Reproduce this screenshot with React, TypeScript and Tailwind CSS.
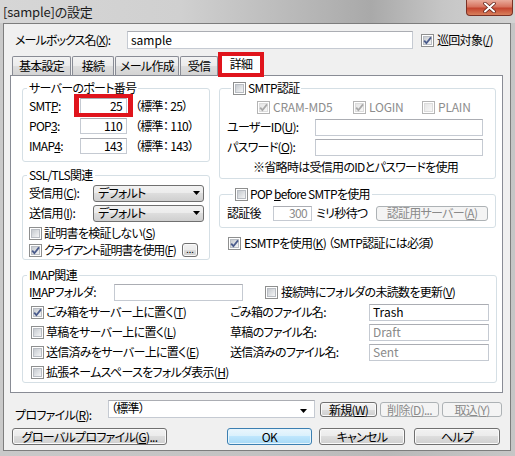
import React from "react";

function U({ c }: { c: string }) {
  return <span className="underline underline-offset-[1px] decoration-[1px]">{c}</span>;
}

function Check({ checked = false, disabled = false }: { checked?: boolean; disabled?: boolean }) {
  return (
    <span
      className={
        disabled
          ? "relative inline-flex shrink-0 w-[13px] h-[13px] border border-[#b4b4b4] bg-white p-[1px]"
          : "relative inline-flex shrink-0 w-[13px] h-[13px] border border-[#8e8f8f] bg-white p-[1px]"
      }
    >
      <span
        className={
          disabled
            ? "block w-full h-full border border-[#dcdcdc] bg-[linear-gradient(135deg,#e6e6e6,#f7f7f7)]"
            : "block w-full h-full border border-[#b9bdc3] bg-[linear-gradient(135deg,#c6cacf,#f4f5f6)]"
        }
      />
      {checked && (
        <svg className="absolute left-0 top-0" width="11" height="11" viewBox="0 0 11 11">
          <path
            d="M2.2 5.6 L4.4 8.2 L9 2.4"
            fill="none"
            stroke={disabled ? "#a9a9a9" : "#4a5b8c"}
            strokeWidth="1.8"
          />
        </svg>
      )}
    </span>
  );
}

function Field({
  cls,
  value = "",
  gray = false,
  right = false,
}: {
  cls: string;
  value?: string;
  gray?: boolean;
  right?: boolean;
}) {
  return (
    <div
      className={`${cls} flex items-center bg-white border border-[#c5cad2] border-t-[#abadb3] leading-[14px] ${
        right ? "justify-end pr-[4px]" : "justify-start pl-[3px]"
      } ${gray ? "text-[#8a8a8a]" : "text-black"}`}
    >
      {value}
    </div>
  );
}

function Btn({
  cls,
  children,
  disabled = false,
  primary = false,
}: {
  cls: string;
  children: React.ReactNode;
  disabled?: boolean;
  primary?: boolean;
}) {
  const base = "flex items-center justify-center rounded-[3px] border leading-[14px] shrink-0";
  const look = disabled
    ? "border-[#adb2b5] bg-[#f4f4f4] text-[#8a8a8a]"
    : primary
    ? "border-[#3c7fb1] bg-[linear-gradient(#eaf6fd,#d9f0fc_50%,#bee6fd_50%,#a7d9f5)] shadow-[inset_0_0_0_1px_#e6f5fd] text-black"
    : "border-[#707070] bg-[linear-gradient(#f2f2f2,#ebebeb_50%,#dddddd_50%,#cfcfcf)] shadow-[inset_0_0_0_1px_#fafafa] text-black";
  return <div className={`${cls} ${base} ${look}`}>{children}</div>;
}

function Arrow() {
  return (
    <svg width="7" height="4" viewBox="0 0 7 4" className="shrink-0">
      <path d="M0 0 H7 L3.5 4 Z" fill="#000" />
    </svg>
  );
}

function Combo({ cls, text }: { cls: string; text: string }) {
  return (
    <div
      className={`${cls} flex items-center justify-between pl-[4px] pr-[3px] rounded-[3px] border border-[#707070] bg-[linear-gradient(#f2f2f2,#ebebeb_50%,#dddddd_50%,#cfcfcf)] leading-[14px]`}
    >
      <span>{text}</span>
      <Arrow />
    </div>
  );
}

function Tab({ w, label }: { w: string; label: string }) {
  return (
    <div
      className={`${w} h-[19px] mr-[1px] border border-b-0 border-[#898c95] rounded-t-[2px] bg-[linear-gradient(#f3f3f3,#ebebeb_50%,#dedede_50%,#d3d3d3)] flex items-center justify-center leading-[14px]`}
    >
      {label}
    </div>
  );
}

export default function App() {
  return (
    <div className="w-[515px] h-[456px] overflow-hidden flex flex-col whitespace-nowrap bg-[linear-gradient(90deg,#c9c9c9,#c2c2c2_50%,#b9b9b9_75%,#c6c6c6)] font-['Noto_Sans_CJK_JP','Noto_Sans',sans-serif] [font-feature-settings:'palt'] text-[12px] tracking-[-0.7px] leading-[14px] text-black">
      {/* Title bar */}
      <div className="h-[23px] shrink-0 flex items-start justify-between bg-[linear-gradient(90deg,#d6d6d6,#d0d0d0_35%,#b4b4b4_62%,#a9a9a9_72%,#c6c6c6_86%,#d3d3d3)]">
        <div className="pl-[3px] pt-[4px] text-[13px] leading-[15px] tracking-[-0.2px] text-[#1c1c1c]">[sample]の設定</div>
        <div className="mr-[2px] w-[47px] h-[16px] rounded-b-[4px] border border-t-0 border-[#7a3125] bg-[linear-gradient(#e9ab9b,#d7745f_45%,#c4452f_55%,#d8805c)] flex items-center justify-center">
          <svg width="13" height="11" viewBox="0 0 13 11">
            <path d="M2 1.5 L11 9.5 M11 1.5 L2 9.5" stroke="#5a1d14" strokeWidth="3.4" strokeLinecap="round" />
            <path d="M2 1.5 L11 9.5 M11 1.5 L2 9.5" stroke="#ffffff" strokeWidth="2" strokeLinecap="round" />
          </svg>
        </div>
      </div>

      {/* Client area */}
      <div className="ml-[3px] w-[508px] h-[428px] shrink-0 border border-[#7d7d7d] bg-[#f0f0f0] flex flex-col">
        {/* Mailbox name row */}
        <div className="flex items-center h-[18px] mt-[7px] pl-[11px]">
          <div className="w-[112px] tracking-[-0.9px]">
            メールボックス名(<U c="X" />):
          </div>
          <Field cls="w-[286px] h-[18px] tracking-normal" value="sample" />
          <div className="ml-[8px] flex items-center">
            <Check checked />
            <span className="ml-[3px]">
              巡回対象(<U c="/" />)
            </span>
          </div>
        </div>

        {/* Tabs */}
        <div className="flex items-end h-[22px] mt-[4px] pl-[8px]">
          <Tab w="w-[59px]" label="基本設定" />
          <Tab w="w-[42px]" label="接続" />
          <Tab w="w-[64px]" label="メール作成" />
          <Tab w="w-[38px]" label="受信" />
          <div className="relative z-10 w-[44px] h-[23px] -mb-[1px] border border-b-0 border-[#898c95] rounded-t-[2px] bg-white flex justify-center pt-[3px] leading-[14px]">
            詳細
            <div className="absolute -left-[2px] -right-[2px] -top-[2px] -bottom-[1px] border-[4px] border-[#e0141c]" />
          </div>
        </div>

        {/* Tab panel */}
        <div className="ml-[6px] w-[493px] h-[318px] shrink-0 border border-[#898c95] bg-white flex flex-col pt-[5px] pl-[11px]">
          <div className="flex items-start">
            {/* Left column */}
            <div className="w-[188px] flex flex-col">
              <fieldset className="border border-[#d5dfe5] rounded-[3px] pl-[6px] pr-[5px] pt-[1px] pb-[5px]">
                <legend className="-ml-[2px] px-[2px] leading-[14px]">サーバーのポート番号</legend>
                <div className="flex items-center h-[20px]">
                  <div className="w-[51px]">
                    SMT<U c="P" />:
                  </div>
                  <div className="relative">
                    <Field cls="w-[47px] h-[16px]" value="25" right />
                    <div className="absolute -left-[6px] -right-[6px] -top-[4px] -bottom-[3px] border-x-[5px] border-y-[4px] border-[#e0141c]" />
                  </div>
                  <span className="ml-[8px]">（標準： 25）</span>
                </div>
                <div className="flex items-center h-[20px]">
                  <div className="w-[51px]">
                    POP<U c="3" />:
                  </div>
                  <Field cls="w-[47px] h-[16px]" value="110" right />
                  <span className="ml-[8px]">（標準： 110）</span>
                </div>
                <div className="flex items-center h-[20px]">
                  <div className="w-[51px]">
                    IMAP<U c="4" />:
                  </div>
                  <Field cls="w-[47px] h-[16px]" value="143" right />
                  <span className="ml-[8px]">（標準： 143）</span>
                </div>
              </fieldset>

              <fieldset className="mt-[6px] border border-[#d5dfe5] rounded-[3px] pl-[6px] pr-[5px] pt-[1px] pb-[1px]">
                <legend className="-ml-[2px] px-[2px] leading-[14px]">SSL/TLS関連</legend>
                <div className="flex items-center h-[20px]">
                  <div className="w-[64px]">
                    受信用(<U c="C" />):
                  </div>
                  <Combo cls="w-[111px] h-[17px]" text="デフォルト" />
                </div>
                <div className="flex items-center h-[20px]">
                  <div className="w-[64px]">
                    送信用(<U c="I" />):
                  </div>
                  <Combo cls="w-[111px] h-[17px]" text="デフォルト" />
                </div>
                <div className="flex items-center h-[14px] mt-[3px]">
                  <Check />
                  <span className="ml-[2px]">
                    証明書を検証しない(<U c="S" />)
                  </span>
                </div>
                <div className="flex items-center h-[16px] mt-[2px]">
                  <Check checked />
                  <span className="ml-[2px] tracking-[-1.1px]">
                    クライアント証明書を使用(<U c="F" />)
                  </span>
                  <Btn cls="ml-auto mr-[6px] w-[16px] h-[14px] text-[9px] tracking-normal">...</Btn>
                </div>
              </fieldset>
            </div>

            {/* Right column */}
            <div className="ml-[9px] w-[277px] flex flex-col">
              <fieldset className="border border-[#d5dfe5] rounded-[3px] pl-[7px] pr-[5px] pt-[2px] pb-[1px]">
                <legend className="ml-[4px] px-[2px] leading-[14px] flex items-center">
                  <Check />
                  <span className="ml-[2px]">SMTP認証</span>
                </legend>
                <div className="flex items-center h-[20px] pl-[30px] text-[#8d8d8d]">
                  <div className="w-[96px] flex items-center">
                    <Check checked disabled />
                    <span className="ml-[3px] tracking-[-0.2px]">CRAM-MD5</span>
                  </div>
                  <div className="w-[69px] flex items-center">
                    <Check checked disabled />
                    <span className="ml-[3px] tracking-[-0.2px]">LOGIN</span>
                  </div>
                  <div className="flex items-center">
                    <Check disabled />
                    <span className="ml-[3px] tracking-[-0.2px]">PLAIN</span>
                  </div>
                </div>
                <div className="flex items-center h-[20px]">
                  <div className="w-[88px]">
                    ユーザーID(<U c="U" />):
                  </div>
                  <Field cls="w-[168px] h-[17px]" />
                </div>
                <div className="flex items-center h-[20px]">
                  <div className="w-[88px]">
                    パスワード(<U c="O" />):
                  </div>
                  <Field cls="w-[168px] h-[17px]" />
                </div>
                <div className="flex items-center h-[20px] pl-[26px]">※省略時は受信用のIDとパスワードを使用</div>
              </fieldset>

              <fieldset className="mt-[8px] border border-[#d5dfe5] rounded-[3px] pl-[7px] pr-[7px] pt-0 pb-[2px]">
                <legend className="ml-[6px] px-[2px] leading-[14px] flex items-center">
                  <Check />
                  <span className="ml-[2px]">
                    POP <U c="b" />efore SMTPを使用
                  </span>
                </legend>
                <div className="flex items-center h-[24px]">
                  <div className="w-[46px]">認証後</div>
                  <Field cls="w-[39px] h-[15px]" value="300" right gray />
                  <span className="ml-[4px]">ミリ秒待つ</span>
                  <Btn cls="ml-auto w-[112px] h-[15px]" disabled>
                    認証用サーバー(<U c="A" />)
                  </Btn>
                </div>
              </fieldset>

              <div className="flex items-center h-[14px] mt-[8px] pl-[9px]">
                <Check checked />
                <span className="ml-[3px]">
                  ESMTPを使用(<U c="K" />) （SMTP認証には必須）
                </span>
              </div>
            </div>
          </div>

          {/* IMAP */}
          <fieldset className="mt-[8px] w-[475px] border border-[#d5dfe5] rounded-[3px] pl-[6px] pr-[5px] pt-0 pb-0">
            <legend className="-ml-[2px] px-[2px] leading-[14px]">IMAP関連</legend>
            <div className="flex items-center h-[20px]">
              <div className="w-[85px]">
                I<U c="M" />APフォルダ:
              </div>
              <Field cls="w-[129px] h-[17px]" />
              <div className="ml-[22px] flex items-center">
                <Check />
                <span className="ml-[3px]">
                  接続時にフォルダの未読数を更新(<U c="V" />)
                </span>
              </div>
            </div>
            <div className="flex items-center h-[20px] pl-[2px]">
              <div className="w-[199px] flex items-center">
                <Check checked />
                <span className="ml-[2px]">
                  ごみ箱をサーバー上に置く(<U c="T" />)
                </span>
              </div>
              <div className="w-[139px]">ごみ箱のファイル名:</div>
              <Field cls="w-[120px] h-[17px] tracking-normal" value="Trash" />
            </div>
            <div className="flex items-center h-[20px] pl-[2px]">
              <div className="w-[199px] flex items-center">
                <Check />
                <span className="ml-[2px]">
                  草稿をサーバー上に置く(<U c="L" />)
                </span>
              </div>
              <div className="w-[139px]">草稿のファイル名:</div>
              <Field cls="w-[120px] h-[17px] tracking-normal" value="Draft" gray />
            </div>
            <div className="flex items-center h-[20px] pl-[2px]">
              <div className="w-[199px] flex items-center">
                <Check />
                <span className="ml-[2px]">
                  送信済みをサーバー上に置く(<U c="E" />)
                </span>
              </div>
              <div className="w-[139px]">送信済みのファイル名:</div>
              <Field cls="w-[120px] h-[17px] tracking-normal" value="Sent" gray />
            </div>
            <div className="flex items-center h-[20px] pl-[2px]">
              <Check />
              <span className="ml-[2px]">
                拡張ネームスペースをフォルダ表示(<U c="H" />)
              </span>
            </div>
          </fieldset>
        </div>

        {/* Profile row */}
        <div className="flex items-start h-[18px] mt-[7px] pl-[11px]">
          <div className="w-[93px] mt-[8px]">
            プロファイル(<U c="R" />):
          </div>
          <div className="w-[207px] h-[18px] bg-white border border-[#c5cad2] border-t-[#abadb3] flex items-center justify-between pl-[2px] pr-[7px]">
            <span className="-mt-[2px]">（標準）</span>
            <span className="mt-[4px]">
              <Arrow />
            </span>
          </div>
          <Btn cls="ml-[5px] mt-[2px] w-[57px] h-[15px]">
            新規(<U c="W" />)
          </Btn>
          <Btn cls="ml-[3px] mt-[2px] w-[59px] h-[15px]" disabled>
            削除(<U c="D" />)...
          </Btn>
          <Btn cls="ml-[3px] mt-[2px] w-[60px] h-[15px]" disabled>
            取込(<U c="Y" />)
          </Btn>
        </div>

        {/* Button row */}
        <div className="flex items-center h-[17px] mt-[10px] pl-[8px]">
          <Btn cls="w-[155px] h-[17px]">
            グローバルプロファイル(<U c="G" />)...
          </Btn>
          <Btn cls="ml-[60px] w-[85px] h-[17px]" primary>
            OK
          </Btn>
          <Btn cls="ml-[7px] w-[86px] h-[17px]">キャンセル</Btn>
          <Btn cls="ml-[9px] w-[86px] h-[17px]">ヘルプ</Btn>
        </div>
      </div>
    </div>
  );
}
